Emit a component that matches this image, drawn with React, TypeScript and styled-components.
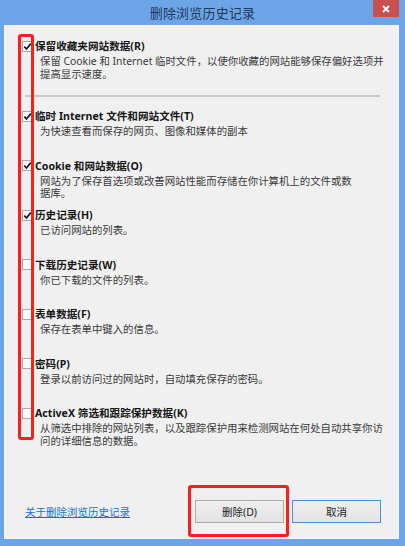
import React from 'react';
import styled, { createGlobalStyle } from 'styled-components';

const GlobalStyle = createGlobalStyle`
  html, body {
    margin: 0;
    padding: 0;
    width: 405px;
    height: 546px;
    overflow: hidden;
    background: #6ba5e7;
  }
  * {
    box-sizing: border-box;
  }
`;

const FONT = `"Noto Sans", "Noto Sans CJK SC", sans-serif`;

const Window = styled.div`
  width: 405px;
  height: 546px;
  display: flex;
  flex-direction: column;
  background: #6ba5e7;
  font-family: ${FONT};
`;

const TitleBar = styled.div`
  height: 25px;
  display: grid;
  grid-template-columns: 1fr auto 1fr;
  align-items: center;
`;

const Title = styled.div`
  grid-column: 2;
  font-size: 13px;
  color: #24375a;
  letter-spacing: 0.2px;
`;

const CloseButton = styled.div`
  grid-column: 3;
  justify-self: end;
  align-self: start;
  width: 26px;
  height: 17px;
  margin-right: 6px;
  background: #c9504e;
  display: flex;
  align-items: center;
  justify-content: center;
`;

const Content = styled.div`
  flex: 1;
  position: relative;
  margin: 0 6px 7px 4px;
  padding: 12px 0 15px 17px;
  background: #f0f0f0;
  border: 1px solid #f7f7f7;
  display: flex;
  flex-direction: column;
`;

const Row = styled.div<{ $height?: number }>`
  display: grid;
  grid-template-columns: 11px 1fr;
  align-content: start;
  column-gap: 2px;
  height: ${({ $height }) => ($height ? `${$height}px` : 'auto')};
`;

const Box = styled.div`
  width: 11px;
  height: 11px;
  margin-top: 2.5px;
  background: #fdfdfd;
  border: 1px solid #a9a9a9;
  display: flex;
  align-items: center;
  justify-content: center;
`;

const Label = styled.div`
  font-size: 10.6px;
  font-weight: 700;
  line-height: 16px;
  color: #161616;
  white-space: nowrap;
`;

const Desc = styled.div`
  grid-column: 2;
  margin: 1px 0 0 5px;
  font-size: 10.4px;
  line-height: 12.5px;
  color: #3a3a3a;
  white-space: nowrap;
`;

const Separator = styled.div`
  height: 2px;
  background: #c8c8c8;
  margin: 15px 18px 11px 3px;
`;

const Footer = styled.div`
  margin-top: auto;
  display: flex;
  align-items: center;
  gap: 8px;
  padding: 0 17px 0 3px;
`;

const HelpLink = styled.a`
  font-size: 10.5px;
  color: #1a6fd0;
  text-decoration: underline;
  margin-right: auto;
  cursor: pointer;
`;

const ButtonWrap = styled.div`
  position: relative;
`;

const Button = styled.div<{ $focused?: boolean }>`
  width: 89px;
  height: 23px;
  display: flex;
  align-items: center;
  justify-content: center;
  font-size: 10.5px;
  color: #1c1c1c;
  background: linear-gradient(#efefef, #e3e3e3);
  border: 1px solid ${({ $focused }) => ($focused ? '#4a90d6' : '#acacac')};
`;

const Highlight = styled.div`
  position: absolute;
  border: 3px solid #ff1c1c;
  border-radius: 3px;
  pointer-events: none;
`;

const ColumnHighlight = styled(Highlight)`
  left: 13px;
  top: 8px;
  width: 16px;
  height: 406px;
`;

const ButtonHighlight = styled(Highlight)`
  left: -7px;
  right: -5px;
  top: -15px;
  bottom: -14px;
`;

const Check = () => (
  <svg width="9" height="9" viewBox="0 0 9 9">
    <path d="M1.3 4.6 L3.5 7 L7.8 1.6" fill="none" stroke="#1a1a1a" strokeWidth="1.7" />
  </svg>
);

interface OptionProps {
  label: string;
  lines: string[];
  checked?: boolean;
  height?: number;
}

function Option({ label, lines, checked, height }: OptionProps) {
  return (
    <Row $height={height}>
      <Box>{checked && <Check />}</Box>
      <Label>{label}</Label>
      <Desc>
        {lines.map((l, i) => (
          <div key={i}>{l}</div>
        ))}
      </Desc>
    </Row>
  );
}

const options: OptionProps[] = [
  {
    label: '临时 Internet 文件和网站文件(T)',
    lines: ['为快速查看而保存的网页、图像和媒体的副本'],
    checked: true,
  },
  {
    label: 'Cookie 和网站数据(O)',
    lines: ['网站为了保存首选项或改善网站性能而存储在你计算机上的文件或数', '据库。'],
    checked: true,
  },
  { label: '历史记录(H)', lines: ['已访问网站的列表。'], checked: true },
  { label: '下载历史记录(W)', lines: ['你已下载的文件的列表。'] },
  { label: '表单数据(F)', lines: ['保存在表单中键入的信息。'] },
  { label: '密码(P)', lines: ['登录以前访问过的网站时，自动填充保存的密码。'] },
  {
    label: 'ActiveX 筛选和跟踪保护数据(K)',
    lines: ['从筛选中排除的网站列表，以及跟踪保护用来检测网站在何处自动共享你访', '问的详细信息的数据。'],
  },
];

export default function App() {
  return (
    <>
      <GlobalStyle />
      <Window>
        <TitleBar>
          <Title>删除浏览历史记录</Title>
          <CloseButton>
            <svg width="8" height="8" viewBox="0 0 8 8">
              <path d="M1 1 L7 7 M7 1 L1 7" stroke="#fff" strokeWidth="1.8" />
            </svg>
          </CloseButton>
        </TitleBar>
        <Content>
          <Option
            label="保留收藏夹网站数据(R)"
            lines={['保留 Cookie 和 Internet 临时文件，以使你收藏的网站能够保存偏好选项并', '提高显示速度。']}
            checked
          />
          <Separator />
          {options.map((o) => (
            <Option key={o.label} {...o} height={49.5} />
          ))}
          <Footer>
            <HelpLink>关于删除浏览历史记录</HelpLink>
            <ButtonWrap>
              <Button>删除(D)</Button>
              <ButtonHighlight />
            </ButtonWrap>
            <Button $focused>取消</Button>
          </Footer>
          <ColumnHighlight />
        </Content>
      </Window>
    </>
  );
}
